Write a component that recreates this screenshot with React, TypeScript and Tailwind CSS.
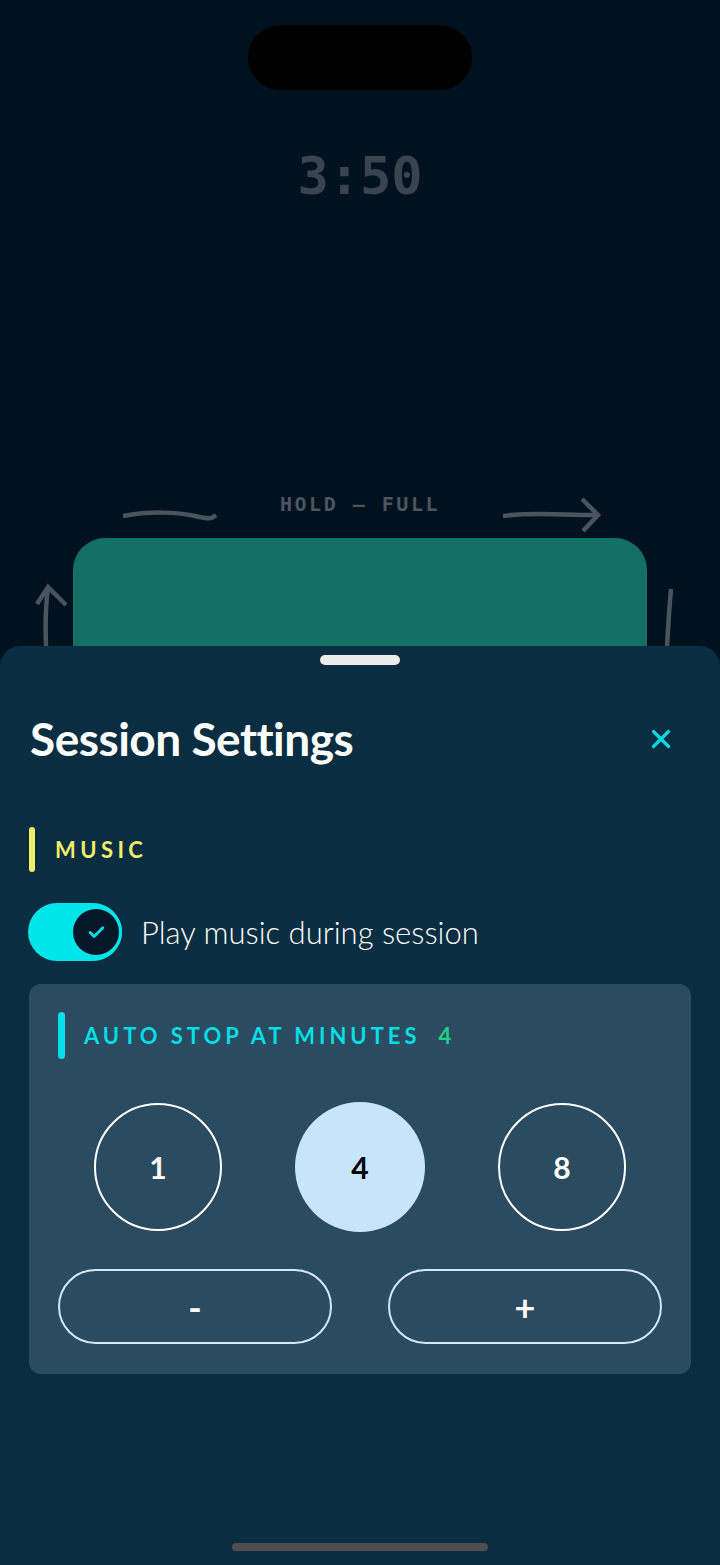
import React from "react";
import { Check, X } from "lucide-react";

const sans = { fontFamily: "Lato, 'Open Sans', sans-serif" };
const mono = { fontFamily: "'DejaVu Sans Mono', 'Liberation Mono', monospace" };

const Doodles = () => (
  <svg
    className="absolute inset-0 pointer-events-none"
    width="720"
    height="646"
    viewBox="0 0 720 646"
    fill="none"
    stroke="#4a545e"
    strokeWidth="4.5"
    strokeLinecap="butt"
    strokeLinejoin="miter"
  >
    <path d="M123 516 C 150 511, 178 512, 195 516 S 212 518, 216 515" />
    <path d="M503 516 C 530 512, 560 515, 598 515" />
    <path d="M582 499 L598 515 L583 531" />
    <path d="M46 646 C 45 620, 46 602, 48 588" />
    <path d="M37 604 L48 587 L66 605" />
    <path d="M671 589 C 669 610, 668 630, 667 646" />
  </svg>
);

const Toggle = () => (
  <div className="flex items-center justify-end w-[94px] h-[58px] rounded-full bg-[#00e5ea]">
    <div className="flex items-center justify-center w-[52px] h-[52px] rounded-full bg-[#03192a] border-[3px] border-[#00e5ea]">
      <Check size={19} strokeWidth={3.5} color="#00e0ea" />
    </div>
  </div>
);

const MinuteCircle = ({ value, active }: { value: number; active?: boolean }) => (
  <div
    className={
      active
        ? "flex items-center justify-center w-[130px] h-[130px] rounded-full bg-[#c9e5fb] text-black text-[30px] font-bold"
        : "flex items-center justify-center w-[128px] h-[128px] rounded-full border-2 border-white text-white text-[30px] font-bold"
    }
  >
    {value}
  </div>
);

const StepButton = ({ label }: { label: string }) => (
  <div className="flex items-center justify-center h-[75px] rounded-full border-2 border-[#d3e8f6] text-white text-[36px] font-bold">
    {label}
  </div>
);

const App = () => {
  return (
    <div className="w-[720px] h-[1565px] overflow-hidden bg-[#01111e]" style={sans}>
      {/* background screen */}
      <div className="relative h-[646px] overflow-hidden flex flex-col items-center">
        <div className="shrink-0 mt-[25px] w-[224px] h-[65px] rounded-full bg-black" />
        <div className="shrink-0 mt-[60px] text-[52px] leading-none font-bold text-[#39444f]" style={mono}>
          3:50
        </div>
        <div
          className="shrink-0 mt-[292px] text-[20px] leading-none font-bold tracking-[2.5px] text-[#4b5660]"
          style={mono}
        >
          HOLD — FULL
        </div>
        <div className="shrink-0 mt-[24px] self-start ml-[73px] w-[574px] h-[200px] rounded-t-[32px] bg-[#127064]" />
        <Doodles />
      </div>

      {/* bottom sheet */}
      <div className="h-[919px] rounded-t-[20px] bg-[#092d41] flex flex-col">
        <div className="shrink-0 pt-[9px] flex justify-center">
          <div className="w-[80px] h-[10px] rounded-full bg-[#ececec]" />
        </div>

        <div className="shrink-0 mt-[46px] h-[56px] flex items-center justify-between pl-[30px] pr-[44px]">
          <h1 className="text-[46px] leading-[56px] font-bold text-white tracking-[-0.5px]">Session Settings</h1>
          <X size={30} strokeWidth={2.6} color="#00d8e2" />
        </div>

        <div className="shrink-0 mt-[60px] ml-[29px] h-[45px] flex items-center gap-[20px]">
          <div className="w-[6px] h-[45px] rounded-full bg-[#f3ec6a]" />
          <span className="text-[22px] font-bold tracking-[0.2em] text-[#f3ec6a]">MUSIC</span>
        </div>

        <div className="shrink-0 mt-[31px] ml-[28px] flex items-center gap-[19px]">
          <Toggle />
          <span className="text-[31px] font-light text-white">Play music during session</span>
        </div>

        <div className="shrink-0 mt-[23px] mx-[29px] rounded-[12px] bg-[#2b4b60] px-[29px] pt-[28px] pb-[30px]">
          <div className="flex items-center h-[47px]">
            <div className="w-[7px] h-[47px] rounded-full bg-[#00e0ea]" />
            <span className="ml-[19px] text-[22px] font-bold tracking-[0.18em] text-[#00dde6]">
              AUTO STOP AT MINUTES
            </span>
            <span className="ml-[18px] text-[22px] font-bold text-[#1fd08a]">4</span>
          </div>

          <div className="mt-[43px] flex items-center justify-center gap-[73px]">
            <MinuteCircle value={1} />
            <MinuteCircle value={4} active />
            <MinuteCircle value={8} />
          </div>

          <div className="mt-[37px] grid grid-cols-2 gap-[56px]">
            <StepButton label="-" />
            <StepButton label="+" />
          </div>
        </div>

        <div className="shrink-0 mt-[169px] flex justify-center">
          <div className="w-[256px] h-[8px] rounded-full bg-[#4e4e4e]" />
        </div>
      </div>
    </div>
  );
};

export default App;
